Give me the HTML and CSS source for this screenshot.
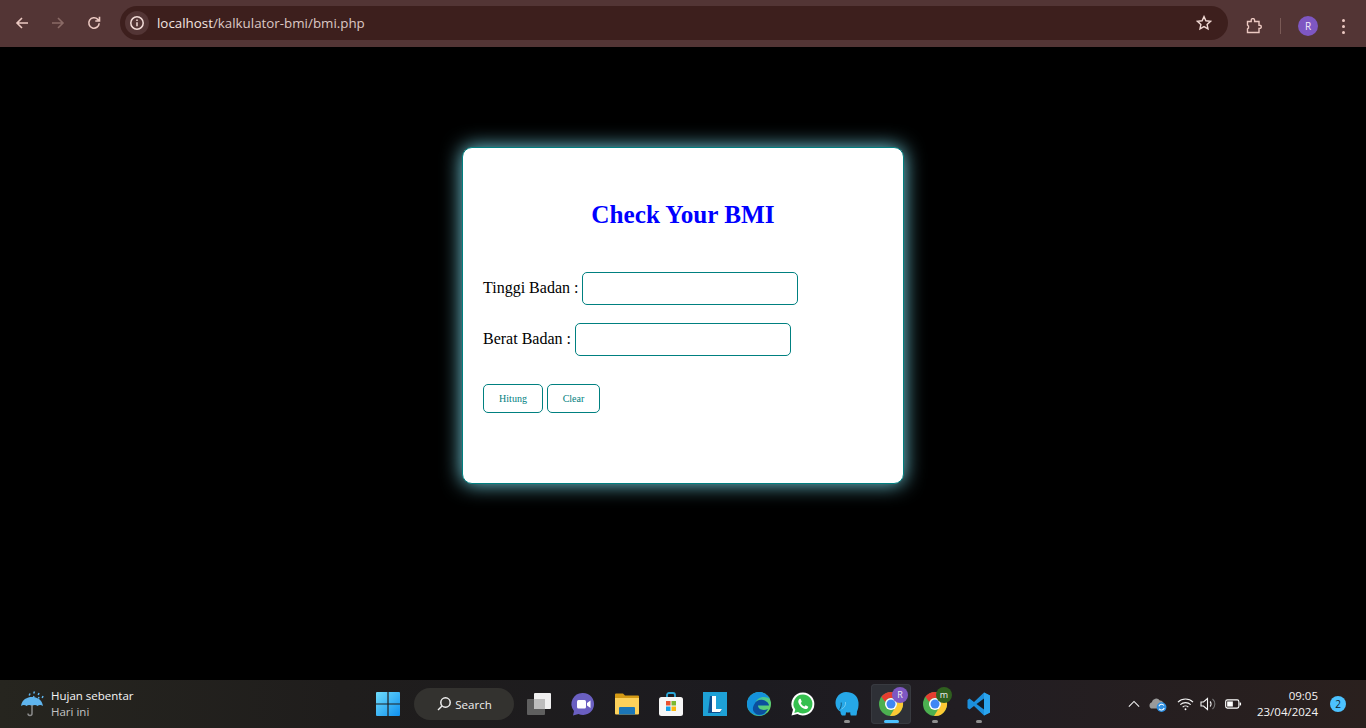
FILE: index.html
```html
<!DOCTYPE html>
<html lang="id">
<head>
<meta charset="utf-8">
<title>Kalkulator BMI</title>
<link rel="stylesheet" href="styles.css">
</head>
<body>
<header class="toolbar">
  <div class="nav">
    <svg class="nav-icon" viewBox="0 0 16 16"><path d="M14 8H3M8 3 3 8l5 5"/></svg>
    <svg class="nav-icon dim" viewBox="0 0 16 16"><path d="M2 8h11M8 3l5 5-5 5"/></svg>
    <svg class="nav-icon" viewBox="0 0 16 16"><path d="M13.200 8.300a5.200 5.200 0 1 1-1.400-3.900L13.500 6M13.500 1.800V6H9.300"/></svg>
  </div>
  <div class="omnibox">
    <span class="chip"><svg class="info" viewBox="0 0 16 16"><circle cx="8" cy="8" r="6.200"/><path d="M8 7.200v4M8 4.400v1.500"/></svg></span>
    <span class="url">localhost<span class="url-dim">/kalkulator-bmi/bmi.php</span></span>
    <svg class="star" viewBox="0 0 16 16"><path d="m8 1.600 1.900 4.200 4.600.5-3.400 3.100.9 4.500L8 11.600l-4 2.300.9-4.500L1.500 6.300l4.600-.5z"/></svg>
  </div>
  <div class="actions">
    <svg class="puzzle" viewBox="0 0 16 16"><path d="M1.500 3.500h3.700V2.300a1.700 1.700 0 0 1 3.400 0v1.200h4.400v3.700h.7a1.600 1.600 0 0 1 0 3.200h-.7v4.100H1.500v-3.700l1-.7V8l-1-.8z"/></svg>
    <span class="sep"></span>
    <span class="avatar">R</span>
    <span class="dots"><i></i><i></i><i></i></span>
  </div>
</header>

<main class="page">
  <section class="card">
    <h2 class="title">Check Your BMI</h2>
    <form class="form">
      <p class="row"><label>Tinggi Badan :</label> <input class="field" type="text"></p>
      <p class="row"><label>Berat Badan :</label> <input class="field" type="text"></p>
      <div class="buttons">
        <button class="btn btn-count" type="button">Hitung</button>
        <button class="btn btn-clear" type="button">Clear</button>
      </div>
    </form>
  </section>
</main>

<footer class="taskbar">
  <div class="weather">
    <svg class="umbrella" viewBox="0 0 28 28">
      <path d="M2 16C3 9.500 8 7 13 7s10 2.500 11 9c-2-1.500-4-1.500-5.500 0-1.500-1.500-3.500-1.500-5.500 0-2-1.500-4-1.500-5.500 0-1.500-1.500-3.500-1.500-5.500 0z" fill="#5fb5ee"/>
      <path d="M13 15v8.500a2 2 0 0 1-4 0" fill="none" stroke="#8b8b8b" stroke-width="1.500"/>
      <path d="M11 3.500l-.8 2M15.500 1.500l-.8 2M20 3l-.8 2M24 6l-.8 2M20 7l-.6 1.500M15 6l-.5 1" stroke="#5fb5ee" stroke-width="1.500" fill="none"/>
    </svg>
    <div class="weather-text"><div class="w1">Hujan sebentar</div><div class="w2">Hari ini</div></div>
  </div>

  <div class="center">
    <span class="slot"><svg class="ico" viewBox="0 0 24 24"><defs><linearGradient id="w" x1="0" y1="0" x2="1" y2="1"><stop offset="0" stop-color="#6fdcfb"/><stop offset="1" stop-color="#0f8fee"/></linearGradient></defs><path fill="url(#w)" d="M0 1a1 1 0 0 1 1-1h10.400v11.400H0zM12.600 0H23a1 1 0 0 1 1 1v10.400H12.600zM0 12.600h11.400V24H1a1 1 0 0 1-1-1zM12.600 12.600H24V23a1 1 0 0 1-1 1H12.600z"/></svg></span>
    <span class="search"><svg class="lens" viewBox="0 0 16 16"><circle cx="9.500" cy="6.500" r="4.700"/><path d="M6 10l-4 4"/></svg>Search</span>
    <span class="slot slot-tv"><svg class="ico" viewBox="0 0 24 24"><rect x="7" y="1" width="17" height="16" rx="1" fill="#f0f0f0"/><rect x="0" y="7" width="18" height="16" rx="1" fill="#6b6b6b" fill-opacity=".85"/><rect x="7" y="7" width="11" height="10" fill="#bdbdbd"/></svg></span>
    <span class="slot"><svg class="ico" viewBox="0 0 24 24"><path d="M12 1a11 11 0 1 1-4.500 21L2 23.500l1-4.500A11 11 0 0 1 12 1z" fill="#6a5fc1"/><path d="M15 2a11 11 0 0 1 0 20 11 11 0 0 0 0-20z" fill="#9b8fe8"/><rect x="6" y="8" width="9" height="8.500" rx="1.500" fill="#fff"/><path d="m16 11 3.500-2.500v7.500L16 13.500z" fill="#fff"/></svg></span>
    <span class="slot"><svg class="ico" viewBox="0 0 24 24"><path d="M0 2.500a1 1 0 0 1 1-1h7l2 2h13a1 1 0 0 1 1 1V9H0z" fill="#d49a14"/><path d="M0 6h24v15.500a1 1 0 0 1-1 1H1a1 1 0 0 1-1-1z" fill="#fcd15b"/><path d="M5 15h14a1 1 0 0 1 1 1v6.500H4V16a1 1 0 0 1 1-1z" fill="#1b76b8"/></svg></span>
    <span class="slot"><svg class="ico" viewBox="0 0 24 24"><path d="M8 5V3a2 2 0 0 1 2-2h4a2 2 0 0 1 2 2v2" fill="none" stroke="#29a7d8" stroke-width="1.800"/><rect x="0" y="5" width="24" height="19" rx="2.500" fill="#f6f6f6"/><rect x="7" y="9" width="4.500" height="4.500" fill="#e8512f"/><rect x="12.500" y="9" width="4.500" height="4.500" fill="#7cb82f"/><rect x="7" y="14.500" width="4.500" height="4.500" fill="#11a0e8"/><rect x="12.500" y="14.500" width="4.500" height="4.500" fill="#fbb80d"/></svg></span>
    <span class="slot"><svg class="ico" viewBox="0 0 24 24"><rect width="24" height="24" fill="#1ea1d6"/><path d="M7 4h6v13h6l-2 4H5z" fill="#0c4f91"/><path d="M9 4h4v13h6l-2 3H9z" fill="#fff"/></svg></span>
    <span class="slot"><svg class="ico" viewBox="0 0 24 24"><defs><linearGradient id="e" x1="0" y1="0" x2="1" y2="1"><stop offset="0" stop-color="#27b7c4"/><stop offset="1" stop-color="#6fd957"/></linearGradient></defs><circle cx="12" cy="12" r="12" fill="url(#e)"/><path d="M0 12C0 5 6 0 12 0c5 0 9 3 11 7-3-2-8-3-12 0-4 3-3 9 1 12 3 2 6 2 8 1.500A12 12 0 0 1 0 12z" fill="#1491dc"/><path d="M7.500 12c1-3 5-5 8.500-4 3 .8 6 3 6 5.500H11c0 4 5 5.500 10 3.500-3 6-10 8-14 3-2-2.500-1-6 .5-8z" fill="#0b4f9e"/></svg></span>
    <span class="slot"><svg class="ico" viewBox="0 0 24 24"><path d="M12 .5a11.500 11.500 0 1 1-5.600 21.600L.5 23.500l1.500-5.700A11.500 11.500 0 0 1 12 .5z" fill="#fff"/><path d="M12 2.500a9.500 9.500 0 1 1-5 17.600l-3.700 1 1-3.500A9.500 9.500 0 0 1 12 2.500z" fill="#35c04f"/><path d="M8.700 6.800c-1.500 1-2 3-.7 5.200 1.300 2.400 3.300 4.300 6 5 1.800.3 3-.7 3.300-2.300l-2.600-1.400-1.200 1.300c-1.700-.7-3-2-3.700-3.700l1-1.200-1.200-2.900z" fill="#fff"/></svg></span>
    <span class="slot running"><svg class="ico" viewBox="0 0 24 24"><path d="M11 0c7 0 12 4 12.500 10.500.2 3.500-.3 6.500-1.500 9 0 1.500-.2 3-.7 4h-5.500c-.5-1-.6-2-.6-3.200-1.500.3-3 .3-4.200 0 0 1.200-.2 2.300-.6 3.200H7c-1-.6-1.500-2-1.500-3.700C2.500 18 .5 15 .5 11 .5 5 5 0 11 0z" fill="#26a8e8"/><path d="M4.500 17.500c1.500-2 2-4.500 1.700-7" stroke="#0e3f5c" stroke-width=".8" fill="none"/><path d="M6.500 17c3-1.500 4.500-4 4-7" stroke="#7fd2f5" stroke-width=".8" fill="none"/></svg></span>
    <span class="slot active">
      <svg class="ico" viewBox="0 0 24 24"><use href="#chrome-mark"/></svg>
      <b class="badge badge-r">R</b>
    </span>
    <span class="slot running">
      <svg class="ico" viewBox="0 0 24 24"><g id="chrome-mark"><circle cx="12" cy="12" r="12" fill="#4caf50"/><path d="M12 0a12 12 0 0 1 10.400 6H12a6 6 0 0 0-5.700 4L2.400 4.800A12 12 0 0 1 12 0z" fill="#e53d30"/><path d="M22.400 6A12 12 0 0 1 11 24l5.200-8.500A6 6 0 0 0 17 8z" fill="#fcc934"/><circle cx="12" cy="12" r="6" fill="#fff"/><circle cx="12" cy="12" r="4.500" fill="#3f86f4"/></g></svg>
      <b class="badge badge-m">m</b>
    </span>
    <span class="slot running"><svg class="ico" viewBox="0 0 24 24"><path d="M17 0.500 23 3.500v17l-6 3L7 14l-4.500 3.500L.5 16V8l2-1.500L7 10z" fill="#1c8fdc"/><path d="M17 6.500v11L9.500 12z" fill="#111a24"/><path d="M17 .5 23 3.500v17l-6 3z" fill="#2aa5ef"/></svg></span>
  </div>

  <div class="tray">
    <svg class="chev" viewBox="0 0 14 8"><path d="M1 7l6-6 6 6"/></svg>
    <svg class="cloud" viewBox="0 0 20 18"><path d="M2 14a4 4 0 0 1 1-7 5 5 0 0 1 9-2 4 4 0 0 1 4 4v5z" fill="#9a9a9a"/><circle cx="14" cy="12.500" r="5.500" fill="#2f8fe0"/><path d="M11 11.500a3.200 3.200 0 0 1 5.700-.8M17 13.500a3.200 3.200 0 0 1-5.700.8" stroke="#fff" stroke-width="1.200" fill="none"/></svg>
    <svg class="wifi" viewBox="0 0 18 14"><path d="M1 5a11.500 11.500 0 0 1 16 0M3.500 7.700a8 8 0 0 1 11 0M6 10.300a4.300 4.300 0 0 1 6 0"/><circle cx="9" cy="12.500" r="1" fill="#fff" stroke="none"/></svg>
    <svg class="speaker" viewBox="0 0 18 14"><path d="M1 5v4h2.500L7.500 12.500v-11L3.500 5zM10 4.500a3.500 3.500 0 0 1 0 5"/><path class="faint" d="M12.500 2a6.500 6.500 0 0 1 0 10"/></svg>
    <svg class="battery" viewBox="0 0 18 12"><rect x=".7" y="1.700" width="14" height="8.600" rx="1.800" fill="none" stroke="#fff" stroke-width="1.200"/><rect x="2.300" y="3.300" width="6" height="5.400" fill="#fff"/><rect x="15.500" y="4.500" width="1.500" height="3" fill="#fff"/></svg>
    <div class="clock"><div>09:05</div><div>23/04/2024</div></div>
    <span class="notif">2</span>
  </div>
</footer>
</body>
</html>
```

FILE: styles.css
```css
* { box-sizing: border-box; }
html, body { margin: 0; height: 100%; }
body {
  width: 1366px;
  height: 728px;
  overflow: hidden;
  background: #000;
  display: flex;
  flex-direction: column;
  font-family: "Liberation Serif", "Times New Roman", serif;
}

/* Browser toolbar */
.toolbar {
  height: 47px;
  flex: none;
  background: #533535;
  display: flex;
  align-items: flex-start;
  font-family: "Open Sans", "Noto Sans", sans-serif;
}
.nav {
  width: 120px;
  height: 40px;
  padding: 6px 0 0 14px;
  display: flex;
  gap: 20px;
  align-items: center;
  flex: none;
}
.nav-icon {
  width: 16px;
  height: 16px;
  fill: none;
  stroke: #ecc9c2;
  stroke-width: 1.600;
}
.nav-icon.dim { stroke: #8a6a66; }
.omnibox {
  margin-top: 6px;
  width: 1108px;
  height: 34px;
  flex: none;
  border-radius: 17px;
  background: #3d1f1d;
  display: flex;
  align-items: center;
  padding-left: 5px;
  padding-right: 16px;
}
.chip {
  width: 24px;
  height: 24px;
  border-radius: 50%;
  background: #533535;
  display: flex;
  align-items: center;
  justify-content: center;
  flex: none;
}
.info {
  width: 16px;
  height: 16px;
  fill: none;
  stroke: #f2dcd8;
  stroke-width: 1.500;
}
.url {
  margin-left: 8px;
  font-size: 13.350px;
  line-height: 20px;
  color: #f3e4e1;
  flex: 1;
  white-space: nowrap;
}
.url-dim { color: #dcc8c4; }
.star {
  width: 16px;
  height: 16px;
  fill: none;
  stroke: #f0d8d3;
  stroke-width: 1.400;
}
.actions {
  flex: 1;
  height: 40px;
  margin-top: 6px;
  display: flex;
  align-items: center;
  padding-left: 18px;
}
.puzzle {
  width: 16px;
  height: 16px;
  fill: none;
  stroke: #ecc9c2;
  stroke-width: 1.400;
}
.sep {
  width: 1px;
  height: 16px;
  background: #7a5a56;
  margin-left: 18px;
}
.avatar {
  width: 20px;
  height: 20px;
  border-radius: 50%;
  background: #7e57c2;
  color: #f5eefb;
  font-size: 10px;
  display: flex;
  align-items: center;
  justify-content: center;
  margin-left: 17px;
}
.dots {
  margin-left: 24px;
  display: flex;
  flex-direction: column;
  gap: 3px;
}
.dots i {
  width: 3px;
  height: 3px;
  border-radius: 50%;
  background: #ecc9c2;
}

/* Page */
.page {
  flex: 1;
  min-height: 0;
  padding-top: 100px;
  background: #000;
}
.card {
  width: 442px;
  height: 337px;
  margin: 0 auto;
  padding: 20px;
  background: #fff;
  border: 1px solid #008080;
  border-radius: 10px;
  box-shadow: 0 0 20px #78d8e8;
}
.title {
  margin: 33px 0 44px;
  color: #0000ff;
  font-size: 25.200px;
  line-height: 27px;
  font-weight: bold;
  text-align: center;
}
.row {
  margin: 0 0 18px;
  font-size: 16px;
  line-height: 20px;
  height: 33px;
  color: #000;
  display: flex;
  align-items: center;
  gap: 4px;
}
.row label { white-space: nowrap; padding-bottom: 2px; }
.field {
  width: 216px;
  height: 33px;
  padding: 0 8px;
  background: #fff;
  border: 1px solid #008080;
  border-radius: 5px;
  outline: none;
}
.buttons {
  display: flex;
  gap: 4px;
  margin-top: 28px;
}
.btn {
  height: 29px;
  padding: 0;
  background: #fff;
  border: 1px solid #008080;
  border-radius: 5px;
  color: #008080;
  font-family: "Liberation Serif", "Times New Roman", serif;
  font-size: 10px;
}
.btn-count { width: 60px; }
.btn-clear { width: 53px; }

/* Taskbar */
.taskbar {
  height: 48px;
  flex: none;
  display: grid;
  grid-template-columns: 1fr auto 1fr;
  align-items: center;
  background: linear-gradient(90deg, #26251f 0%, #1f1d1c 25%, #1c1b20 55%, #211d22 70%, #2a201e 100%);
  color: #fff;
  font-family: "Open Sans", "Noto Sans", sans-serif;
}
.weather {
  display: flex;
  align-items: center;
  padding-left: 19px;
  gap: 4px;
}
.umbrella { width: 28px; height: 28px; }
.weather-text { font-size: 11.500px; line-height: 16px; }
.w1 { color: #f5f5f5; }
.w2 { color: #c4c4c4; }
.center {
  display: flex;
  align-items: center;
  height: 48px;
  padding-left: 1px;
}
.slot {
  position: relative;
  width: 44px;
  height: 40px;
  display: flex;
  align-items: center;
  justify-content: center;
}
.slot-tv { margin-left: 3px; }
.ico { position: relative; width: 24px; height: 24px; overflow: visible; }
.search {
  width: 100px;
  height: 32px;
  margin-left: 4px;
  border-radius: 16px;
  background: #33322f;
  display: flex;
  align-items: center;
  justify-content: center;
  gap: 3px;
  font-size: 11.500px;
  color: #f0f0f0;
}
.lens {
  width: 16px;
  height: 16px;
  fill: none;
  stroke: #f0f0f0;
  stroke-width: 1.500;
}
.running::after,
.active::after {
  content: "";
  position: absolute;
  left: 50%;
  bottom: 1px;
  width: 6px;
  height: 3px;
  margin-left: -3px;
  border-radius: 2px;
  background: #8f8f8f;
}
.active::before {
  content: "";
  position: absolute;
  top: 0;
  bottom: 0;
  left: 2px;
  right: 2px;
  border-radius: 4px;
  background: #2e3036;
  box-shadow: inset 0 0 0 1px #383a40;
}
.active::after {
  width: 15px;
  margin-left: -7.500px;
  background: #4cc2ff;
}
.badge {
  position: absolute;
  top: 3px;
  left: 23px;
  width: 16px;
  height: 16px;
  border-radius: 50%;
  font-size: 9px;
  font-weight: 400;
  line-height: 16px;
  text-align: center;
  color: #f0f0f0;
}
.badge-r { background: #7e57c2; }
.badge-m { background: #2f5f1f; }
.tray {
  display: flex;
  align-items: center;
  justify-content: flex-end;
  padding-right: 20px;
}
.chev {
  width: 12px;
  height: 8px;
  fill: none;
  stroke: #f0f0f0;
  stroke-width: 1.300;
}
.cloud { width: 18px; height: 16px; margin-left: 9px; }
.wifi {
  width: 17px;
  height: 14px;
  margin-left: 10px;
  fill: none;
  stroke: #f5f5f5;
  stroke-width: 1.200;
}
.speaker {
  width: 18px;
  height: 14px;
  margin-left: 6px;
  fill: none;
  stroke: #f5f5f5;
  stroke-width: 1.100;
}
.speaker .faint { stroke: #777; }
.battery { width: 17px; height: 12px; margin-left: 7px; margin-right: 1px; }
.clock {
  margin-left: 14px;
  font-size: 11.500px;
  line-height: 16px;
  text-align: right;
  color: #f5f5f5;
}
.notif {
  width: 16px;
  height: 16px;
  margin-left: 12px;
  border-radius: 50%;
  background: #4cc2ff;
  color: #10202a;
  font-size: 10px;
  line-height: 16px;
  text-align: center;
}
```
